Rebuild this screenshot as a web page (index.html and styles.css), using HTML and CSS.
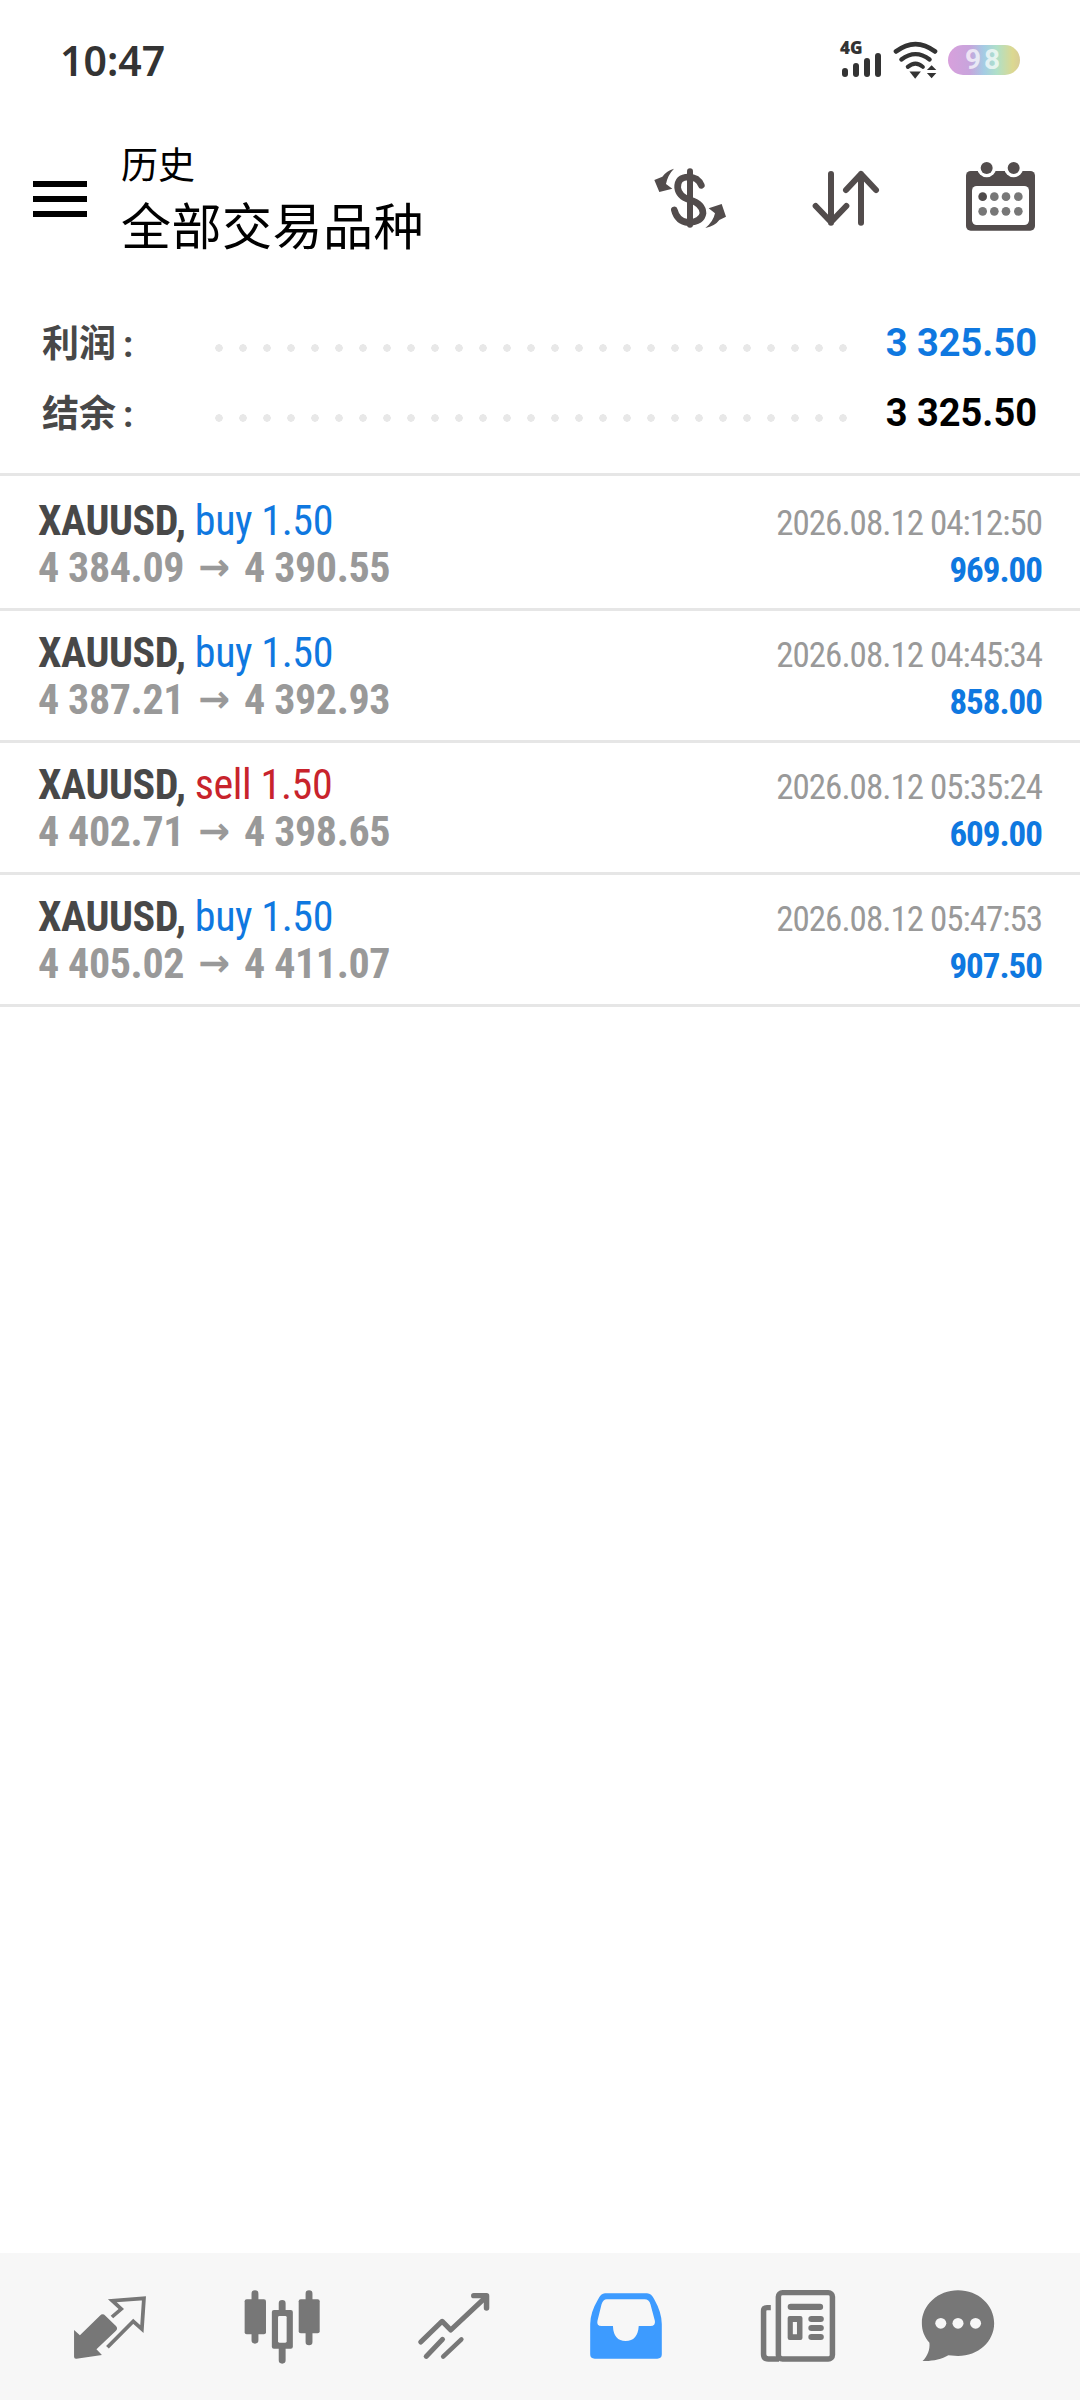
FILE: index.html
```html
<!DOCTYPE html>
<html lang="zh">
<head>
    <meta charset="UTF-8">
    <meta name="viewport" content="width=device-width, initial-scale=1.0">
    <title>历史</title>
    <link rel="stylesheet" href="styles.css">
</head>
<body>
    <div class="app">
        <div class="status-bar">
            <span class="clock">10:47</span>
            <div class="status-icons">
                <div class="signal">
                    <span class="signal-type">4G</span>
                    <div class="signal-bars">
                        <i class="bar-1"></i><i class="bar-2"></i><i class="bar-3"></i><i class="bar-4"></i>
                    </div>
                </div>
                <svg class="wifi" viewBox="880 115 140 125">
                    <path d="M892 152 Q950 108 1008 152" fill="none" stroke="#333" stroke-width="14" stroke-linecap="round"/>
                    <path d="M908 176 Q950 144 992 176" fill="none" stroke="#333" stroke-width="13" stroke-linecap="round"/>
                    <path d="M927 198 Q950 178 972 198" fill="none" stroke="#333" stroke-width="12" stroke-linecap="round"/>
                    <path d="M932 212 H966 L949 233 Z" fill="#333"/>
                    <path d="M998 193 L1012 207 H984 Z M984 216 H1012 L998 232 Z" fill="#333"/>
                </svg>
                <div class="battery">98</div>
            </div>
        </div>

        <header class="toolbar">
            <div class="menu-button"><i></i><i></i><i></i></div>
            <div class="titles">
                <div class="title-small">历史</div>
                <div class="title-big">全部交易品种</div>
            </div>
            <div class="actions">
                <!-- currency switch -->
                <svg class="icon" viewBox="135 462 270 270">
                    <path d="M270 514 V674" stroke="#524c4c" stroke-width="18" stroke-linecap="round" fill="none"/>
                    <path d="M304 556 Q294 531 265 531 Q232 531 233 563 Q236 590 270 600 Q309 612 309 640 Q305 666 265 668 Q232 665 223 630" stroke="#524c4c" stroke-width="20" stroke-linecap="round" fill="none"/>
                    <path d="M222 506 Q200 512 187 530 L163 540 L178 576 L217 566 L198 552 Q203 525 222 506 Z" fill="#524c4c"/>
                    <path d="M316 684 Q345 678 358 660 L378 650 L365 612 L326 625 L345 640 Q340 665 316 684 Z" fill="#524c4c"/>
                </svg>
                <!-- sort -->
                <svg class="icon" viewBox="600 462 270 270">
                    <path d="M693 522 V668 M647 618 L693 666 L739 618" stroke="#524c4c" stroke-width="18" stroke-linecap="round" stroke-linejoin="round" fill="none"/>
                    <path d="M783 668 V522 M738 570 L783 522 L828 570" stroke="#524c4c" stroke-width="18" stroke-linecap="round" stroke-linejoin="round" fill="none"/>
                </svg>
                <!-- calendar -->
                <svg class="icon" viewBox="1065 462 270 270">
                    <rect x="1098" y="513" width="207" height="179" rx="14" fill="#524c4c"/>
                    <rect x="1116" y="558" width="171" height="117" rx="14" fill="#fff"/>
                    <circle cx="1160" cy="504" r="28" fill="#fff"/>
                    <circle cx="1241" cy="504" r="28" fill="#fff"/>
                    <circle cx="1160" cy="504" r="18" fill="#524c4c"/>
                    <circle cx="1241" cy="504" r="18" fill="#524c4c"/>
                    <g fill="#777">
                        <circle cx="1148" cy="590" r="13" fill="#4f4a4a"/>
                        <circle cx="1183" cy="590" r="13"/>
                        <circle cx="1218" cy="590" r="13"/>
                        <circle cx="1255" cy="590" r="13"/>
                        <circle cx="1148" cy="634" r="13"/>
                        <circle cx="1183" cy="634" r="13"/>
                        <circle cx="1218" cy="634" r="13"/>
                        <circle cx="1255" cy="634" r="13"/>
                    </g>
                </svg>
            </div>
        </header>

        <section class="summary">
            <div class="summary-row">
                <span class="summary-label">利润<span class="colon">:</span></span>
                <span class="dots"></span>
                <span class="summary-value profit">3 325.50</span>
            </div>
            <div class="summary-row">
                <span class="summary-label">结余<span class="colon">:</span></span>
                <span class="dots"></span>
                <span class="summary-value">3 325.50</span>
            </div>
        </section>

        <main class="deals">
            <div class="deal">
                <div class="deal-left">
                    <div class="line-top"><b>XAUUSD,</b> <span class="buy">buy 1.50</span></div>
                    <div class="line-prices">4 384.09<span class="arrow">→</span>4 390.55</div>
                </div>
                <div class="deal-right">
                    <div class="deal-time">2026.08.12 04:12:50</div>
                    <div class="deal-profit">969.00</div>
                </div>
            </div>
            <div class="deal">
                <div class="deal-left">
                    <div class="line-top"><b>XAUUSD,</b> <span class="buy">buy 1.50</span></div>
                    <div class="line-prices">4 387.21<span class="arrow">→</span>4 392.93</div>
                </div>
                <div class="deal-right">
                    <div class="deal-time">2026.08.12 04:45:34</div>
                    <div class="deal-profit">858.00</div>
                </div>
            </div>
            <div class="deal">
                <div class="deal-left">
                    <div class="line-top"><b>XAUUSD,</b> <span class="sell">sell 1.50</span></div>
                    <div class="line-prices">4 402.71<span class="arrow">→</span>4 398.65</div>
                </div>
                <div class="deal-right">
                    <div class="deal-time">2026.08.12 05:35:24</div>
                    <div class="deal-profit">609.00</div>
                </div>
            </div>
            <div class="deal">
                <div class="deal-left">
                    <div class="line-top"><b>XAUUSD,</b> <span class="buy">buy 1.50</span></div>
                    <div class="line-prices">4 405.02<span class="arrow">→</span>4 411.07</div>
                </div>
                <div class="deal-right">
                    <div class="deal-time">2026.08.12 05:47:53</div>
                    <div class="deal-profit">907.50</div>
                </div>
            </div>
        </main>

        <nav class="tabs">
            <!-- quotes -->
            <svg class="icon" viewBox="188.7 123 261.4 270" preserveAspectRatio="none">
                <path d="M215 267 L232 283 L290 224 Q298 216 306 224 L336 254 Q344 262 336 270 L280 325 L296 342 L222 353 Q215 354 215 347 Z" fill="#777"/>
                <path d="M325 228 L352 204 L326 179 L418 172 L412 264 L387 241 L312 319" stroke="#777" stroke-width="11" fill="none"/>
            </svg>
            <!-- chart -->
            <svg class="icon" viewBox="685.8 123 261.4 270" preserveAspectRatio="none">
                <path d="M738 158 V298 M895 158 V303 M817 187 V358" stroke="#777" stroke-width="20" stroke-linecap="round"/>
                <rect x="708" y="175" width="62" height="105" rx="6" fill="#777"/>
                <rect x="865" y="175" width="61" height="102" rx="6" fill="#777"/>
                <rect x="787" y="207" width="61" height="116" rx="6" fill="#777"/>
                <rect x="805" y="225" width="25" height="80" rx="4" fill="#f7f7f7"/>
            </svg>
            <!-- trade -->
            <svg class="icon" viewBox="1186.8 123 261.4 270" preserveAspectRatio="none">
                <path d="M1221 303 L1283 241 L1308 267 L1406 172" stroke="#777" stroke-width="15" stroke-linecap="round" stroke-linejoin="round" fill="none"/>
                <path d="M1375 164 H1412 V201" stroke="#777" stroke-width="16" stroke-linecap="round" stroke-linejoin="round" fill="none"/>
                <path d="M1237 346 L1284 295" stroke="#777" stroke-width="15" stroke-linecap="round"/>
                <path d="M1286 347 L1339 295" stroke="#777" stroke-width="13" stroke-linecap="round"/>
            </svg>
            <!-- history, current tab -->
            <svg class="icon" viewBox="120.3 123 261.4 270" preserveAspectRatio="none">
                <path fill-rule="evenodd" fill="#3d9bff" d="M190 157 L312 157 Q325 157 333 175 Q355 215 355 250 L355 340 Q355 353 342 353 L160 353 Q147 353 147 340 L147 250 Q147 215 170 175 Q178 157 190 157 Z M195 175 Q185 175 180 190 L168 240 Q165 255 180 255 L213 255 Q215 300 250 300 Q285 300 288 255 L322 255 Q337 255 335 240 L322 190 Q318 175 305 175 Z"/>
            </svg>
            <!-- news -->
            <svg class="icon" viewBox="624.3 123 261.4 270" preserveAspectRatio="none">
                <rect x="698" y="155" width="157" height="199" rx="12" fill="none" stroke="#777" stroke-width="16"/>
                <path d="M676 200 H665 Q655 200 655 210 V340 Q655 354 669 354 H700" fill="none" stroke="#777" stroke-width="16"/>
                <rect x="725" y="188" width="103" height="19" rx="9" fill="#777"/>
                <path fill-rule="evenodd" fill="#777" d="M731 225 H762 Q768 225 768 231 V291 Q768 297 762 297 H731 Q725 297 725 291 V231 Q725 225 731 225 Z M740 243 V280 H752 V243 Z"/>
                <rect x="785" y="225" width="45" height="18" rx="9" fill="#777"/>
                <rect x="785" y="252" width="45" height="18" rx="9" fill="#777"/>
                <rect x="785" y="279" width="45" height="18" rx="9" fill="#777"/>
            </svg>
            <!-- messages -->
            <svg class="icon tab-last" viewBox="1082.3 123 261.4 270" preserveAspectRatio="none">
                <path fill="#777" d="M1213 148 C1272 148 1318 192 1318 247 C1318 302 1272 345 1213 345 L1185 343 C1165 355 1135 362 1110 360 C1125 345 1132 325 1130 305 C1115 288 1108 268 1108 247 C1108 192 1155 148 1213 148 Z"/>
                <circle cx="1163" cy="247" r="16" fill="#f7f7f7"/>
                <circle cx="1213" cy="247" r="16" fill="#f7f7f7"/>
                <circle cx="1264" cy="247" r="16" fill="#f7f7f7"/>
            </svg>
        </nav>
    </div>
</body>
</html>
```

FILE: styles.css
```css
* {
    box-sizing: border-box;
}

body {
    margin: 0;
    background-color: #fff;
    font-family: Roboto, "Noto Sans CJK SC", sans-serif;
}

.app {
    display: flex;
    flex-direction: column;
    width: 1080px;
    height: 2400px;
    overflow: hidden;
}

/* status bar */
.status-bar {
    display: flex;
    justify-content: space-between;
    align-items: center;
    height: 119px;
    padding: 0 60px;
}

.clock {
    font-family: "Noto Sans", sans-serif;
    font-size: 41px;
    font-weight: 600;
    color: #333;
}

.status-icons {
    display: flex;
    align-items: center;
    height: 40px;
}

.signal {
    display: flex;
    flex-direction: column;
    width: 44px;
}

.signal-type {
    font-family: "Open Sans", sans-serif;
    font-size: 17px;
    font-weight: 800;
    line-height: 12px;
    color: #333;
}

.signal-bars {
    display: flex;
    align-items: flex-end;
    gap: 5px;
    height: 24px;
    margin-top: -1px;
    margin-left: 2px;
}

.signal-bars i {
    width: 6px;
    background-color: #333;
    border-radius: 3px;
}

.bar-1 { height: 9px; }
.bar-2 { height: 14px; }
.bar-3 { height: 19px; }
.bar-4 { height: 24px; }

.wifi {
    width: 47px;
    height: 42px;
    margin-left: 8px;
}

.battery {
    width: 72px;
    height: 30px;
    margin-left: 9px;
    border-radius: 15px;
    background: linear-gradient(90deg, #d8a0dc 0%, #c8a4dc 30%, #a4cce4 50%, #b0e0c8 68%, #dcd890 90%, #d8cc98 100%);
    font-size: 28px;
    font-weight: 700;
    line-height: 30px;
    text-align: center;
    letter-spacing: 3px;
    color: rgba(255, 255, 255, 0.7);
}

/* toolbar */
.toolbar {
    display: flex;
    align-items: center;
    height: 160px;
    padding: 0 35px 0 33px;
}

.menu-button {
    display: flex;
    flex-direction: column;
    gap: 9px;
    width: 54px;
}

.menu-button i {
    height: 6px;
    background-color: #000;
}

.titles {
    margin-left: 34px;
    padding-top: 6px;
    color: #000;
}

.title-small {
    font-size: 37px;
    line-height: 52px;
}

.title-big {
    font-size: 50px;
    line-height: 70px;
    letter-spacing: 0.5px;
}

.actions {
    display: flex;
    gap: 65px;
    margin-left: auto;
}

.icon {
    flex: none;
    width: 90px;
    height: 90px;
}

/* totals */
.summary {
    padding: 29px 43px 25px 42px;
}

.summary-row {
    display: flex;
    align-items: center;
    height: 70px;
}

.summary-label {
    width: 172.5px;
    margin-bottom: 4px;
    font-size: 37px;
    font-weight: 700;
    color: #484848;
}

.colon {
    margin-left: 7px;
}

.dots {
    flex: 1;
    height: 8px;
    margin-top: 9px;
    background-image: radial-gradient(circle at 4px 4px, #e8e8e8 3.5px, transparent 4px);
    background-size: 24px 8px;
    background-repeat: repeat-x;
}

.summary-value {
    width: 175px;
    font-size: 38px;
    font-weight: 700;
    text-align: right;
    color: #000;
}

.summary-value.profit {
    color: #0f78e0;
}

/* deal list */
.deals {
    flex: 1;
    padding-top: 3px;
    border-top: 3px solid #e6e6e6;
}

.deal {
    display: flex;
    justify-content: space-between;
    align-items: center;
    height: 132px;
    padding: 0 38px;
    border-bottom: 3px solid #e6e6e6;
}

.deal-left,
.deal-right {
    font-stretch: 75%;
}

.line-top,
.line-prices {
    height: 47px;
    font-size: 42px;
    line-height: 47px;
    letter-spacing: -0.4px;
}

.line-top b {
    color: #484848;
}

.buy {
    color: #0f78e0;
}

.sell {
    color: #c8232c;
}

.line-prices {
    font-weight: 700;
    color: #999;
}

.arrow {
    display: inline-block;
    width: 60px;
    font-family: "DejaVu Sans", sans-serif;
    font-size: 38px;
    font-stretch: normal;
    font-weight: 700;
    line-height: 0;
    text-align: center;
    vertical-align: 2px;
}

.deal-right {
    padding-top: 6px;
    text-align: right;
}

.deal-time,
.deal-profit {
    font-size: 35px;
    line-height: 47px;
    letter-spacing: -1px;
}

.deal-time {
    color: #999;
}

.deal-profit {
    font-weight: 700;
    color: #0f78e0;
}

/* bottom tabs */
.tabs {
    display: flex;
    align-items: center;
    gap: 82px;
    height: 147px;
    padding-left: 65px;
    background-color: #f7f7f7;
}

.tab-last {
    margin-left: -12px;
}
```
